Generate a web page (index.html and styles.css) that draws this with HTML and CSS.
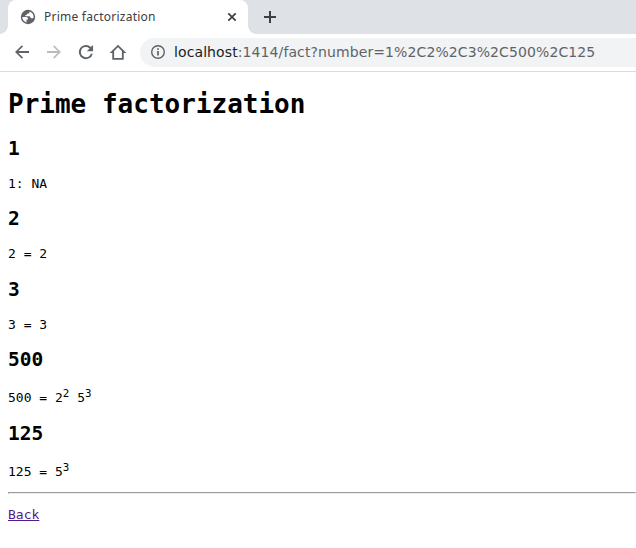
FILE: index.html
```html
<!DOCTYPE html>
<html lang="en">
<head>
<meta charset="utf-8">
<title>Prime factorization</title>
<link rel="stylesheet" href="styles.css">
</head>
<body>
<header class="tabs">
  <div class="tab">
    <svg width="16" height="16" viewBox="0 0 16 16"><circle cx="8" cy="8" r="7.200" fill="#5f6368"/><path d="M2.300 8H6.300q1.700.2 1.700 1.700v.8H6.500v3C3.800 12.600 2.300 10.500 2.300 8ZM9.500 2.500V3.300Q9.500 4.700 8 4.700H6.800V6H5.400V7.300H9.500q1.200.3 1.200 2h2.700C14.300 6 12.300 3.300 9.500 2.500Z" fill="#fff"/></svg>
    <span class="tab-title">Prime factorization</span>
    <svg width="10" height="10" viewBox="0 0 10 10"><path d="m1.300 1.300 7.400 7.400M8.700 1.300 1.300 8.700" stroke="#3c4043" stroke-width="1.700"/></svg>
  </div>
  <svg class="plus" width="12" height="12" viewBox="0 0 12 12"><path d="M6 0v12M0 6h12" stroke="#3c4043" stroke-width="2"/></svg>
</header>
<nav class="toolbar">
  <svg width="24" height="24" viewBox="0 0 24 24"><path fill="#5f6368" d="M20.500 10.900H7.700l5.500-5.500L11.800 4l-8.200 8 8.200 8 1.400-1.400-5.500-5.500h12.800z"/></svg>
  <svg width="24" height="24" viewBox="0 0 24 24"><path fill="#babcbe" d="M3.500 10.900h12.800l-5.500-5.500L12.200 4l8.200 8-8.200 8-1.400-1.400 5.500-5.500H3.500z"/></svg>
  <svg width="24" height="24" viewBox="0 0 24 24"><path fill="#5f6368" d="M17.950 6.050A8.500 8.500 0 1 0 20.200 14h-2.450A6.100 6.100 0 1 1 12 5.900c1.700 0 3.200.7 4.300 1.800L13 11h7.500V3.500z"/></svg>
  <svg width="24" height="24" viewBox="0 0 24 24"><path d="M4.500 12.200 12 4.700l7.500 7.500H17.800v8H6.200v-8Z" fill="none" stroke="#5f6368" stroke-width="2.200"/></svg>
  <div class="address">
    <svg width="16" height="16" viewBox="0 0 16 16"><circle cx="8" cy="8" r="6.300" fill="none" stroke="#5f6368" stroke-width="1.400"/><path d="M8 7v4.500M8 4.300v1.500" stroke="#5f6368" stroke-width="1.700"/></svg>
    <span class="url"><span class="host">localhost</span>:1414/fact?number=1%2C2%2C3%2C500%2C125</span>
  </div>
</nav>
<main class="page">
  <h1>Prime factorization</h1>
  <h2>1</h2><p>1: NA</p>
  <h2>2</h2><p>2 = 2</p>
  <h2>3</h2><p>3 = 3</p>
  <h2>500</h2><p>500 = 2<sup>2</sup> 5<sup>3</sup></p>
  <h2>125</h2><p>125 = 5<sup>3</sup></p>
  <hr>
  <a class="back" href="#">Back</a>
</main>
</body>
</html>
```
FILE: styles.css
```css
body { margin: 0; background: #fff; overflow: hidden; }
svg { display: block; flex: none; }
.tabs { display: flex; height: 34px; background: #dee1e6; }
.tab { position: relative; display: flex; align-items: center; box-sizing: border-box; width: 240px; margin-left: 8px; padding: 0 11px 0 12px; background: #fff; border-radius: 8px 8px 0 0; }
.tab::before, .tab::after { content: ""; position: absolute; bottom: 0; width: 8px; height: 8px; }
.tab::before { left: -8px; background: radial-gradient(circle at 0 0, transparent 7.500px, #fff 8px); }
.tab::after { right: -8px; background: radial-gradient(circle at 100% 0, transparent 7.500px, #fff 8px); }
.tab-title { flex: 1; margin-left: 8px; font: 12px "Noto Sans", sans-serif; letter-spacing: .24px; color: #3c4043; position: relative; top: -1px; }
.plus { margin: 11px 0 0 16px; }
.toolbar { display: flex; align-items: center; gap: 8px; box-sizing: border-box; height: 38px; padding: 0 0 1px 10px; border-bottom: 1px solid #dadce0; }
.toolbar > svg { transform: scale(.83); }
.address { display: flex; align-items: center; flex: 1; height: 29px; padding-left: 10px; margin-left: 2px; border-radius: 14.500px 0 0 14.500px; background: #f1f3f4; }
.url { margin-left: 8px; font: 14px "DejaVu Sans", sans-serif; letter-spacing: .1px; color: #5f6368; white-space: nowrap; }
.host { color: #202124; }
.page { margin: 0 0 0 8px; font: 13px "DejaVu Sans Mono", monospace; color: #000; }
h1 { font-size: 26px; margin: 17.420px 0; }
h2 { font-size: 19.500px; margin: 16.185px 0; }
p { margin: 13px 0; }
hr { margin: 6.500px 0; }
.back { display: inline-block; margin-top: 6px; color: #551a8b; }
```
